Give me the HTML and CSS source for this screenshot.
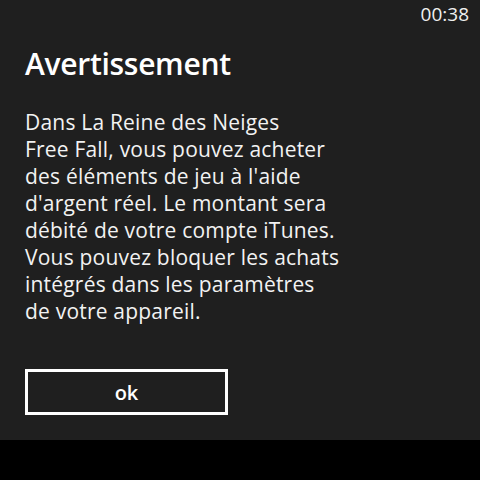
FILE: index.html
```html
<!DOCTYPE html>
<html lang="fr">
<head>
    <meta charset="UTF-8">
    <meta name="viewport" content="width=device-width, initial-scale=1.0">
    <title>Avertissement</title>
    <link rel="stylesheet" href="styles.css">
</head>
<body>
    <div class="dialog">
        <div class="status-bar">00:38</div>

        <h1 class="dialog-title">Avertissement</h1>

        <p class="dialog-text">
            Dans La Reine des Neiges<br>
            Free Fall, vous pouvez acheter<br>
            des éléments de jeu à l'aide<br>
            d'argent réel. Le montant sera<br>
            débité de votre compte iTunes.<br>
            Vous pouvez bloquer les achats<br>
            intégrés dans les paramètres<br>
            de votre appareil.
        </p>

        <button class="btn-ok">ok</button>
    </div>
</body>
</html>
```

FILE: styles.css
```css
body {
    margin: 0;
    background-color: #000; /* black below the dialog */
    font-family: "Open Sans", "Noto Sans", sans-serif;
    color: #fff;
}

.dialog {
    background-color: #1f1f1f;
    height: 440px;
    padding: 0 11px 0 25px;
    box-sizing: border-box;
}

.status-bar {
    text-align: right;
    font-size: 19px;
    line-height: 28px;
    color: #f0f0f0;
}

.dialog-title {
    margin: 16px 0 0 0;
    font-size: 30px;
    line-height: 40px;
    font-weight: 600;
    letter-spacing: -0.3px;
}

.dialog-text {
    margin: 25px 0 0 0;
    font-size: 21px;
    line-height: 27px;
    letter-spacing: 0.2px;
    color: #f2f2f2;
}

.btn-ok {
    display: block;
    margin-top: 44px;
    width: 203px;
    height: 46px;
    background: transparent;
    border: 3px solid #fff;
    color: #fff;
    font-family: inherit;
    font-size: 20px;
    font-weight: 600;
    padding: 0;
}
```
